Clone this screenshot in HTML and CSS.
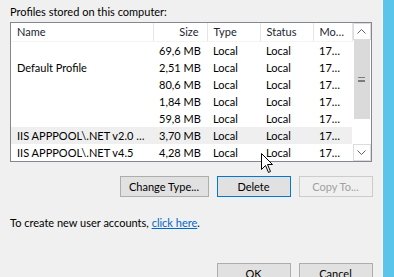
FILE: index.html
```html
<!DOCTYPE html>
<html lang="en">
<head>
    <meta charset="UTF-8">
    <title>User Profiles</title>
    <link rel="stylesheet" href="styles.css">
</head>
<body>
    <div class="dialog">
        <div class="panel">
            <p class="caption">Profiles stored on this computer:</p>
            <div class="listview">
                <table class="profiles">
                    <colgroup>
                        <col class="col-name">
                        <col class="col-size">
                        <col class="col-type">
                        <col class="col-status">
                        <col class="col-mod">
                    </colgroup>
                    <thead>
                        <tr>
                            <th>Name</th>
                            <th class="num">Size</th>
                            <th>Type</th>
                            <th>Status</th>
                            <th>Mo…</th>
                        </tr>
                    </thead>
                    <tbody>
                        <tr><td></td><td class="num">69,6 MB</td><td>Local</td><td>Local</td><td>17…</td></tr>
                        <tr><td>Default Profile</td><td class="num">2,51 MB</td><td>Local</td><td>Local</td><td>17…</td></tr>
                        <tr><td></td><td class="num">80,6 MB</td><td>Local</td><td>Local</td><td>17…</td></tr>
                        <tr><td></td><td class="num">1,84 MB</td><td>Local</td><td>Local</td><td>17…</td></tr>
                        <tr><td></td><td class="num">59,8 MB</td><td>Local</td><td>Local</td><td>17…</td></tr>
                        <tr class="hot"><td>IIS APPPOOL\.NET v2.0 …</td><td class="num">3,70 MB</td><td>Local</td><td>Local</td><td>17…</td></tr>
                        <tr><td>IIS APPPOOL\.NET v4.5</td><td class="num">4,28 MB</td><td>Local</td><td>Local</td><td>17…</td></tr>
                    </tbody>
                </table>
                <div class="scrollbar">
                    <div class="arrow">
                        <svg width="9" height="5" viewBox="0 0 9 5"><polyline points="0.5,4.5 4.5,0.5 8.5,4.5" fill="none" stroke="#606060" stroke-width="1"/></svg>
                    </div>
                    <div class="thumb">
                        <span class="grip"></span>
                    </div>
                    <div class="track"></div>
                    <div class="arrow">
                        <svg width="9" height="5" viewBox="0 0 9 5"><polyline points="0.5,0.5 4.5,4.5 8.5,0.5" fill="none" stroke="#606060" stroke-width="1"/></svg>
                    </div>
                </div>
            </div>
            <div class="actions">
                <button class="wide">Change Type...</button>
                <button class="focused">Delete</button>
                <button disabled>Copy To...</button>
            </div>
            <p class="note">To create new user accounts, <a href="#">click here</a>.</p>
            <div class="actions footer">
                <button>OK</button>
                <button>Cancel</button>
            </div>
        </div>
        <div class="edge"></div>
    </div>
    <svg class="cursor" width="13" height="21" viewBox="0 0 13 21">
        <path d="M0.5,0.5 L0.5,16.5 L4.5,12.5 L7.5,19.5 L9.5,18.5 L6.5,11.5 L11.5,11.5 Z" fill="#fff" stroke="#000" stroke-width="1" stroke-linejoin="miter"/>
    </svg>
</body>
</html>
```

FILE: styles.css
```css
body {
    margin: 0;
    font-family: Lato, "Liberation Sans", sans-serif;
    font-size: 11px;
    color: #000;
    background-color: #f0f0f0;
}
.dialog {
    display: flex;
    height: 277px;
    overflow: hidden;
}
.panel {
    flex: 1;
    padding: 4px 10px 0;
}
.edge {
    width: 12px;
    border-left: 1px solid #fff;
    background-color: #5bc4ea;
}
.caption {
    margin: 0 0 3px;
    line-height: 15px;
}
.listview {
    display: flex;
    height: 138px;
    border: 1px solid #828790;
    background-color: #fff;
}
.profiles {
    width: 341px;
    table-layout: fixed;
    border-collapse: collapse;
    align-self: flex-start;
}
.col-name { width: 142px; }
.col-size { width: 54px; }
.col-type { width: 53px; }
.col-status { width: 53px; }
.col-mod { width: 39px; }
.profiles th {
    height: 18px;
    padding: 0 5px 0 6px;
    font-weight: normal;
    text-align: left;
    color: #1a2433;
    border-right: 1px solid #e5e5e5;
    border-bottom: 1px solid #f4f4f4;
    box-sizing: border-box;
}
.profiles td {
    height: 17px;
    padding: 0 5px 0 6px;
    white-space: nowrap;
    overflow: hidden;
}
.profiles .num {
    text-align: right;
    padding-right: 8px;
}
.profiles tr.hot td {
    background-color: #efefef;
}
.scrollbar {
    width: 18px;
    display: flex;
    flex-direction: column;
    background-color: #fff;
}
.arrow {
    height: 17px;
    border: 1px solid #dcdcdc;
    box-sizing: border-box;
    display: flex;
    align-items: center;
    justify-content: center;
}
.thumb {
    height: 79px;
    margin: 0 1px;
    background-color: #dadada;
    display: flex;
    align-items: center;
    justify-content: center;
}
.grip {
    width: 7px;
    height: 5px;
    border-top: 1px solid #7c7c7c;
    border-bottom: 1px solid #7c7c7c;
    background: linear-gradient(#dadada 2px, #7c7c7c 2px, #7c7c7c 3px, #dadada 3px);
    box-sizing: border-box;
}
.track {
    flex: 1;
}
.actions {
    display: flex;
    justify-content: flex-end;
    gap: 8px;
    margin: 14px -1px 0 0;
}
.actions button {
    width: 74px;
    height: 21px;
    padding: 0;
    font-family: Lato, "Liberation Sans", sans-serif;
    font-size: 11px;
    color: #000;
    background-color: #e1e1e1;
    border: 1px solid #adadad;
}
.actions button.wide {
    width: 89px;
}
.actions button.focused {
    border-color: #0078d7;
}
.actions button:disabled {
    color: #a0a0a0;
    background-color: #f0f0f0;
    border-color: #cccccc;
}
.note {
    margin: 18px 0 0;
    line-height: 15px;
}
.note a {
    color: #0066cc;
}
.footer {
    margin-top: 33px;
}
.cursor {
    position: absolute;
    left: 261px;
    top: 153px;
}
```
